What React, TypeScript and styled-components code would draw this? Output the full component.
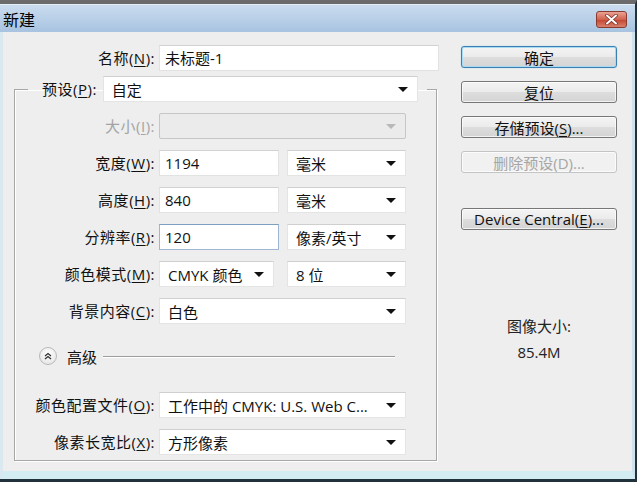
import * as React from 'react'
import styled, { createGlobalStyle } from 'styled-components'

const GlobalStyle = createGlobalStyle`
  html, body {
    margin: 0;
    padding: 0;
    background: #5f6a70;
  }
  body {
    font-family: "Open Sans", "Noto Sans CJK SC", sans-serif;
    font-size: 15px;
    color: #111;
  }
`

const SWindow = styled.div`
  width: 637px;
  height: 482px;
  box-sizing: border-box;
  border-top: 4px solid #6b6b6b;
  border-right: 2px solid #22323b;
  border-bottom: 3px solid #22323b;
  display: flex;
  flex-direction: column;
  background: #eeeeee;
`

const STitleBar = styled.div`
  height: 28px;
  flex: none;
  display: flex;
  align-items: center;
  justify-content: space-between;
  padding: 0 8px 0 3px;
  background: linear-gradient(#cadcef, #a8c3e0);
  border-top: 1px solid #e4eef8;
  box-sizing: border-box;
`

const STitle = styled.span`
  font-family: "Noto Sans CJK SC", sans-serif;
  font-size: 16px;
  color: #000;
`

const SClose = styled.div`
  width: 31px;
  height: 17px;
  margin-top: 1px;
  box-sizing: border-box;
  border: 1px solid #8a3b30;
  border-radius: 3px;
  background: linear-gradient(#eaa394, #d0624f 50%, #c3442f 51%, #d9806c);
  display: flex;
  align-items: center;
  justify-content: center;
`

const SFrame = styled.div`
  flex: 1;
  display: flex;
  border-left: 3px solid #dbe8ef;
  border-right: 3px solid #cfe3ee;
  border-bottom: 8px solid #d4edf3;
  min-height: 0;
`

const SBody = styled.div`
  flex: 1;
  display: flex;
  padding-top: 13px;
  background: #eeeeee;
`

const SLeftPane = styled.div`
  width: 440px;
  flex: none;
`

const SRightPane = styled.div`
  width: 156px;
  margin-left: 18px;
  padding-top: 1px;
  display: flex;
  flex-direction: column;
`

const SNameRow = styled.div`
  display: grid;
  grid-template-columns: 152px 280px;
  column-gap: 4px;
  align-items: center;
`

const SLabel = styled.label<{ disabled?: boolean }>`
  text-align: right;
  white-space: nowrap;
  color: ${({ disabled }) => (disabled ? '#a4a4a4' : '#111')};
  font-family: "Open Sans", "Noto Sans CJK SC", sans-serif;
  font-size: 15px;
  letter-spacing: 0.5px;
  line-height: 26px;

  u {
    text-underline-offset: 2px;
  }
`

const SInput = styled.div<{ width?: number; focused?: boolean }>`
  width: ${({ width }) => (width ? `${width}px` : '100%')};
  height: 26px;
  box-sizing: border-box;
  background: #fff;
  border: 1px solid ${({ focused }) => (focused ? '#9db7d2' : '#e2e2e2')};
  border-top-color: ${({ focused }) => (focused ? '#7f9fc0' : '#d2d2d2')};
  padding: 0 5px;
  line-height: 24px;
  white-space: nowrap;
  overflow: hidden;
`

const SSelect = styled.div<{ width: number; disabled?: boolean }>`
  width: ${({ width }) => width}px;
  height: 26px;
  box-sizing: border-box;
  display: flex;
  align-items: center;
  justify-content: space-between;
  padding: 0 9px 0 8px;
  background: ${({ disabled }) => (disabled ? '#ebebeb' : '#fff')};
  border: 1px solid ${({ disabled }) => (disabled ? '#c6c6c6' : '#e4e4e4')};
  border-top-color: ${({ disabled }) => (disabled ? '#c6c6c6' : '#cfcfcf')};
  border-radius: ${({ disabled }) => (disabled ? '2px' : '0')};
  white-space: nowrap;
`

const SArrow = styled.span<{ disabled?: boolean }>`
  width: 0;
  height: 0;
  border-left: 5px solid transparent;
  border-right: 5px solid transparent;
  border-top: 5px solid ${({ disabled }) => (disabled ? '#b8b8b8' : '#111')};
  flex: none;
`

const SFieldset = styled.fieldset`
  margin: 5px 0 0 11px;
  width: 423px;
  box-sizing: border-box;
  border: 1px solid #a7a7a7;
  box-shadow: inset 1px 1px 0 #fff, 1px 1px 0 #fff;
  padding: 11px 0 5px 0;
  min-inline-size: 0;
`

const SLegend = styled.legend`
  margin-left: 13px;
  padding: 0 9px 0 14px;
  display: flex;
  align-items: center;
  column-gap: 6px;
`

const SRows = styled.div`
  display: flex;
  flex-direction: column;
  row-gap: 11px;
`

const SRow = styled.div<{ marginTop?: number }>`
  display: grid;
  grid-template-columns: 140px auto;
  column-gap: 4px;
  align-items: center;
  margin-top: ${({ marginTop }) => (marginTop ? `${marginTop}px` : '0')};
`

const SControls = styled.div<{ gap: number }>`
  display: flex;
  column-gap: ${({ gap }) => gap}px;
`

const SAdvanced = styled.div`
  display: flex;
  align-items: center;
  height: 20px;
  margin: 22px 41px 0 24px;
`

const SAdvButton = styled.div`
  width: 18px;
  height: 18px;
  box-sizing: border-box;
  border-radius: 50%;
  border: 1px solid #b9b9b9;
  background: radial-gradient(circle at 50% 35%, #ffffff, #e0e0e0);
  display: flex;
  align-items: center;
  justify-content: center;
`

const SAdvText = styled.span`
  font-family: "Noto Sans CJK SC", sans-serif;
  font-size: 15px;
  margin-left: 10px;
`

const SAdvLine = styled.div`
  flex: 1;
  height: 1px;
  background: #9d9d9d;
  box-shadow: 0 1px 0 #fff;
  margin-left: 6px;
`

const SButton = styled.div<{ primary?: boolean; disabled?: boolean; marginTop?: number }>`
  height: 22px;
  box-sizing: border-box;
  margin-top: ${({ marginTop }) => (marginTop !== undefined ? `${marginTop}px` : '13px')};
  border: 1px solid ${({ primary, disabled }) => (primary ? '#3c7fb1' : disabled ? '#c4c4c4' : '#777')};
  border-radius: 3px;
  background: ${({ disabled }) =>
    disabled ? '#f1f1f1' : 'linear-gradient(#f4f4f4, #ebebeb 50%, #dddddd 51%, #d4d4d4)'};
  box-shadow: ${({ primary }) =>
    primary ? 'inset 0 0 0 1px #a6dbf5, 0 0 1px #6fb6e0' : 'inset 0 0 0 1px rgba(255,255,255,0.7)'};
  color: ${({ disabled }) => (disabled ? '#a6a6a6' : '#111')};
  display: flex;
  align-items: center;
  justify-content: center;
  font-size: 15px;
  white-space: nowrap;

  u {
    text-underline-offset: 2px;
  }
`

const SInfo = styled.div`
  margin-top: 83px;
  text-align: center;
  line-height: 26px;
  font-size: 15px;
  color: #222;
`

function Select(props: { width: number; value?: string; disabled?: boolean }) {
  return (
    <SSelect width={props.width} disabled={props.disabled}>
      <span>{props.value}</span>
      <SArrow disabled={props.disabled} />
    </SSelect>
  )
}

function Label(props: { text: string; hotkey: string; disabled?: boolean }) {
  return (
    <SLabel disabled={props.disabled}>
      {props.text}(<u>{props.hotkey}</u>):
    </SLabel>
  )
}

function App() {
  return (
    <>
      <GlobalStyle />
      <SWindow>
        <STitleBar>
          <STitle>新建</STitle>
          <SClose>
            <svg width="13" height="11" viewBox="0 0 13 11">
              <path d="M2 1.5 L11 9.5 M11 1.5 L2 9.5" stroke="#7a2a20" strokeWidth="3.4" strokeLinecap="round" />
              <path d="M2 1.5 L11 9.5 M11 1.5 L2 9.5" stroke="#fff" strokeWidth="2" strokeLinecap="round" />
            </svg>
          </SClose>
        </STitleBar>
        <SFrame>
          <SBody>
            <SLeftPane>
              <SNameRow>
                <Label text="名称" hotkey="N" />
                <SInput>未标题-1</SInput>
              </SNameRow>

              <SFieldset>
                <SLegend>
                  <Label text="预设" hotkey="P" />
                  <Select width={315} value="自定" />
                </SLegend>

                <SRows>
                  <SRow>
                    <Label text="大小" hotkey="I" disabled />
                    <Select width={247} disabled />
                  </SRow>
                  <SRow>
                    <Label text="宽度" hotkey="W" />
                    <SControls gap={8}>
                      <SInput width={120}>1194</SInput>
                      <Select width={119} value="毫米" />
                    </SControls>
                  </SRow>
                  <SRow>
                    <Label text="高度" hotkey="H" />
                    <SControls gap={8}>
                      <SInput width={120}>840</SInput>
                      <Select width={119} value="毫米" />
                    </SControls>
                  </SRow>
                  <SRow>
                    <Label text="分辨率" hotkey="R" />
                    <SControls gap={8}>
                      <SInput width={120} focused>120</SInput>
                      <Select width={119} value="像素/英寸" />
                    </SControls>
                  </SRow>
                  <SRow>
                    <Label text="颜色模式" hotkey="M" />
                    <SControls gap={13}>
                      <Select width={115} value="CMYK 颜色" />
                      <Select width={119} value="8 位" />
                    </SControls>
                  </SRow>
                  <SRow>
                    <Label text="背景内容" hotkey="C" />
                    <Select width={247} value="白色" />
                  </SRow>
                </SRows>

                <SAdvanced>
                  <SAdvButton>
                    <svg width="8" height="8" viewBox="0 0 8 8">
                      <path d="M1 4 L4 1.5 L7 4 M1 7 L4 4.5 L7 7" fill="none" stroke="#333" strokeWidth="1.3" />
                    </svg>
                  </SAdvButton>
                  <SAdvText>高级</SAdvText>
                  <SAdvLine />
                </SAdvanced>

                <SRows>
                  <SRow marginTop={26}>
                    <Label text="颜色配置文件" hotkey="O" />
                    <Select width={247} value="工作中的 CMYK: U.S. Web C..." />
                  </SRow>
                  <SRow>
                    <Label text="像素长宽比" hotkey="X" />
                    <Select width={247} value="方形像素" />
                  </SRow>
                </SRows>
              </SFieldset>
            </SLeftPane>

            <SRightPane>
              <SButton primary marginTop={0}>确定</SButton>
              <SButton>复位</SButton>
              <SButton>
                <span>
                  存储预设(<u>S</u>)...
                </span>
              </SButton>
              <SButton disabled>删除预设(D)...</SButton>
              <SButton marginTop={35}>
                <span>
                  Device Central(<u>E</u>)...
                </span>
              </SButton>
              <SInfo>
                图像大小:
                <br />
                85.4M
              </SInfo>
            </SRightPane>
          </SBody>
        </SFrame>
      </SWindow>
    </>
  )
}

export default App
